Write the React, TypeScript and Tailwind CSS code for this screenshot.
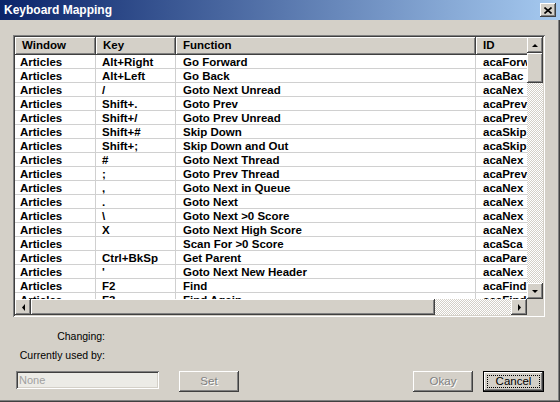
import React from "react";

const rows: [string, string, string][] = [
  ["Alt+Right", "Go Forward", "acaForw"],
  ["Alt+Left", "Go Back", "acaBac"],
  ["/", "Goto Next Unread", "acaNex"],
  ["Shift+.", "Goto Prev", "acaPrev"],
  ["Shift+/", "Goto Prev Unread", "acaPrev"],
  ["Shift+#", "Skip Down", "acaSkip"],
  ["Shift+;", "Skip Down and Out", "acaSkip"],
  ["#", "Goto Next Thread", "acaNex"],
  [";", "Goto Prev Thread", "acaPrev"],
  [",", "Goto Next in Queue", "acaNex"],
  [".", "Goto Next", "acaNex"],
  ["\\", "Goto Next >0 Score", "acaNex"],
  ["X", "Goto Next High Score", "acaNex"],
  ["", "Scan For >0 Score", "acaSca"],
  ["Ctrl+BkSp", "Get Parent", "acaPare"],
  ["'", "Goto Next New Header", "acaNex"],
  ["F2", "Find", "acaFind"],
  ["F3", "Find Again", "acaFind"],
];

const raised =
  "shadow-[inset_-1px_-1px_#404040,inset_1px_1px_#ffffff,inset_-2px_-2px_#808080,inset_2px_2px_#d4d0c8]";
const checker =
  "bg-[repeating-conic-gradient(#d4d0c8_0%_25%,#ffffff_0%_50%)] bg-size-[2px_2px]";

function Arrow({ dir }: { dir: "up" | "down" | "left" | "right" }) {
  const pts = {
    up: "4,1 7,4 1,4",
    down: "1,1 7,1 4,4",
    left: "4,0 4,7 1,3.5",
    right: "1,0 1,7 4,3.5",
  }[dir];
  const vertical = dir === "up" || dir === "down";
  return (
    <svg width={vertical ? 8 : 5} height={vertical ? 5 : 7} viewBox={vertical ? "0 0 8 5" : "0 0 5 7"}>
      <polygon points={pts} fill="#000" />
    </svg>
  );
}

function ScrollBtn({ dir }: { dir: "up" | "down" | "left" | "right" }) {
  return (
    <div className={`w-[16px] h-[16px] shrink-0 bg-[#d4d0c8] flex items-center justify-center ${raised}`}>
      <Arrow dir={dir} />
    </div>
  );
}

function Button({ label, disabled, primary }: { label: string; disabled?: boolean; primary?: boolean }) {
  if (primary) {
    return (
      <div className="w-[61px] h-[21px] border border-black bg-[#d4d0c8]">
        <div className={`w-full h-full p-[3px] ${raised}`}>
          <div className="w-full h-full border border-dotted border-black flex items-center justify-center text-[11.5px] leading-none text-black">
            {label}
          </div>
        </div>
      </div>
    );
  }
  return (
    <div
      className={`w-[60px] h-[21px] bg-[#d4d0c8] flex items-center justify-center text-[11.5px] leading-none ${raised} ${
        disabled ? "text-[#808080] [text-shadow:1px_1px_0_#ffffff]" : "text-black"
      }`}
    >
      {label}
    </div>
  );
}

export default function App() {
  return (
    <div className="w-[560px] h-[402px] bg-[#d4d0c8] flex flex-col overflow-hidden shadow-[inset_-1px_-1px_#404040,inset_-2px_-2px_#808080] font-['Liberation_Sans',Arial,sans-serif] select-none">
      {/* Title bar */}
      <div className="h-[20px] shrink-0 flex items-center justify-between pl-[4px] pr-[4px] bg-[linear-gradient(90deg,#0a246a,#a6caf0)]">
        <span className="text-white font-bold text-[12px] leading-none">Keyboard Mapping</span>
        <div className={`w-[16px] h-[14px] bg-[#d4d0c8] flex items-center justify-center ${raised}`}>
          <svg width="8" height="7" viewBox="0 0 8 7">
            <path d="M0.5 0.5 L7.5 6.5 M7.5 0.5 L0.5 6.5" stroke="#000" strokeWidth="1.6" />
          </svg>
        </div>
      </div>

      {/* List view */}
      <div className="ml-[13px] mt-[15px] w-[532px] h-[282px] p-[2px] shadow-[inset_1px_1px_#808080,inset_-1px_-1px_#ffffff,inset_2px_2px_#404040,inset_-2px_-2px_#d4d0c8]">
        <div className="w-full h-full grid grid-cols-[1fr_16px] grid-rows-[1fr_16px] bg-white">
          <div className="overflow-hidden text-[11.5px] font-bold text-black">
            <div className="flex h-[18px] bg-[#d4d0c8]">
              {[
                ["Window", "w-[81px]"],
                ["Key", "w-[80px]"],
                ["Function", "w-[300px]"],
                ["ID", "w-[80px]"],
              ].map(([t, w]) => (
                <div
                  key={t}
                  className={`${w} shrink-0 h-full pl-[7px] flex items-center shadow-[inset_-1px_-1px_#404040,inset_1px_1px_#ffffff,inset_-2px_-2px_#808080]`}
                >
                  {t}
                </div>
              ))}
            </div>
            {rows.map(([key, fn, id], i) => (
              <div key={i} className="flex h-[14px] leading-[15px] border-b border-[#d0d0d0]">
                <div className="w-[81px] shrink-0 pl-[5px] border-r border-[#d0d0d0]">Articles</div>
                <div className="w-[80px] shrink-0 pl-[6px] border-r border-[#d0d0d0] whitespace-pre">{key}</div>
                <div className="w-[300px] shrink-0 pl-[7px] border-r border-[#d0d0d0] whitespace-nowrap">{fn}</div>
                <div className="w-[51px] shrink-0 pl-[7px] whitespace-nowrap overflow-hidden">{id}</div>
              </div>
            ))}
          </div>

          {/* Vertical scrollbar */}
          <div className={`flex flex-col ${checker}`}>
            <ScrollBtn dir="up" />
            <div className={`h-[30px] bg-[#d4d0c8] ${raised}`} />
            <div className="flex-1" />
            <ScrollBtn dir="down" />
          </div>

          {/* Horizontal scrollbar */}
          <div className={`flex ${checker}`}>
            <ScrollBtn dir="left" />
            <div className={`w-[404px] bg-[#d4d0c8] ${raised}`} />
            <div className="flex-1" />
            <ScrollBtn dir="right" />
          </div>
          <div className="bg-[#d4d0c8]" />
        </div>
      </div>

      {/* Labels */}
      <div className="w-[105px] text-right text-[10.5px] text-black">
        <div className="mt-[12px] leading-[14px]">Changing:</div>
        <div className="mt-[5px] leading-[14px]">Currently used by:</div>
      </div>

      {/* Bottom row */}
      <div className="mt-[9px] flex items-start pl-[16px] pr-[16px]">
        <div className="w-[143px] h-[18px] bg-[#ecebe6] px-[3px] flex items-center text-[11px] text-[#a0a0a0] shadow-[inset_1px_1px_#808080,inset_-1px_-1px_#ffffff,inset_2px_2px_#404040,inset_-2px_-2px_#d4d0c8]">
          None
        </div>
        <div className="ml-[20px]">
          <Button label="Set" disabled />
        </div>
        <div className="flex-1" />
        <Button label="Okay" disabled />
        <div className="ml-[10px]">
          <Button label="Cancel" primary />
        </div>
      </div>
    </div>
  );
}
